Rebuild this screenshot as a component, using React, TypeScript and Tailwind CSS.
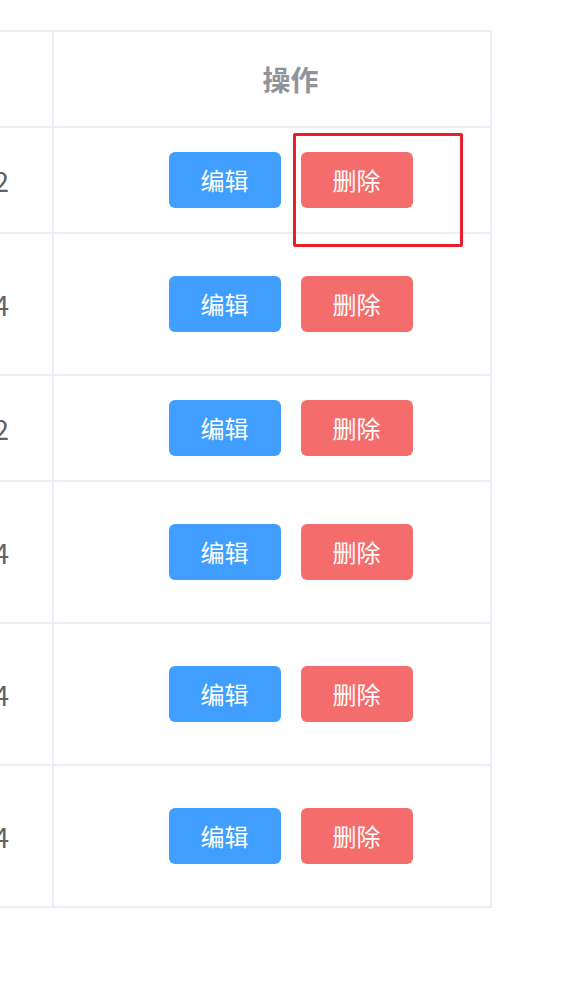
const rows = [
  { value: '2022-01-02', h: 'h-[106px]' },
  { value: '2022-01-04', h: 'h-[142px]' },
  { value: '2022-01-02', h: 'h-[106px]' },
  { value: '2022-01-04', h: 'h-[142px]' },
  { value: '2022-01-04', h: 'h-[142px]' },
  { value: '2022-01-04', h: 'h-[140px]' },
];

const font = { fontFamily: '"Noto Sans CJK SC", "Liberation Sans", sans-serif' };

export default function App() {
  return (
    <div className="relative min-h-[997px] w-[564px] bg-white pt-[30px]" style={font}>
      <div className="w-[492px] border-t-2 border-r-2 border-b-2 border-[#ebeef5]">
        {/* header */}
        <div className="flex h-[96px] border-b-2 border-[#ebeef5]">
          <div className="w-[54px] shrink-0 border-r-2 border-[#ebeef5]" />
          <div className="flex flex-1 items-center justify-center pl-[37px] text-[28px] font-bold text-[#909399]">
            操作
          </div>
        </div>

        {rows.map((row, i) => (
          <div
            key={i}
            className={`flex ${row.h} ${i < rows.length - 1 ? 'border-b-2' : ''} border-[#ebeef5]`}
          >
            <div className="flex w-[54px] shrink-0 items-center justify-end overflow-hidden border-r-2 border-[#ebeef5] pr-[43px]">
              <span className="whitespace-nowrap text-[28px] text-[#606266]">{row.value}</span>
            </div>
            <div className="flex flex-1 items-center justify-center gap-[20px] pl-[37px]">
              <button className="h-[56px] w-[112px] rounded-[6px] bg-[#409eff] text-[24px] text-white">
                编辑
              </button>
              <button className="h-[56px] w-[112px] rounded-[6px] bg-[#f56c6c] text-[24px] text-white">
                删除
              </button>
            </div>
          </div>
        ))}
      </div>

      {/* highlight box */}
      <div className="absolute left-[293px] top-[133px] h-[114px] w-[170px] rounded-[2px] border-[3px] border-[#e8202a]" />
    </div>
  );
}
